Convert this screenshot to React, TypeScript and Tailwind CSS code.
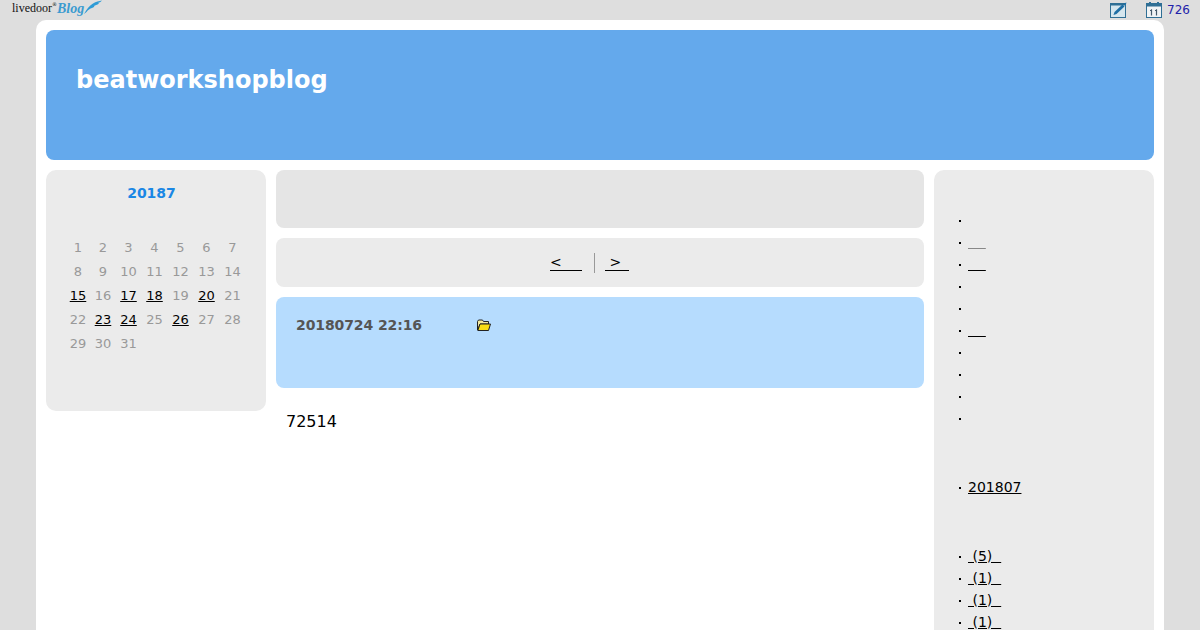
import React from "react";

const dejavu = "font-['DejaVu_Sans',sans-serif]";

const LINKED_DAYS = [15, 17, 18, 20, 23, 24, 26];
const DAYS = Array.from({ length: 31 }, (_, i) => i + 1);

const MENU = [
  { link: false },
  { link: true, grey: true },
  { link: true },
  { link: false },
  { link: false },
  { link: true },
  { link: false },
  { link: false },
  { link: false },
  { link: false },
];

const Bullet = () => (
  <span className="w-[8px] shrink-0 text-[14px] leading-[22px] text-black">
    <span className="ml-[-1px] inline-block h-[2px] w-[2px] bg-black align-middle" />
  </span>
);

const LogoFeather = () => (
  <svg width="18" height="15" viewBox="0 0 18 15">
    <path d="M0 14 C3 9 5 6 9 3.5 C12 1.5 15 1 18 0.5 C16.5 2 15.5 2.5 14 3 C15.5 3 15 4 13.5 4.5 C12 5 11 5.5 10 6 C11 6.5 9.5 7.5 8 8 C6 8.5 4 10 2.5 12 Z" fill="#2e9bd6" />
  </svg>
);

const EditIcon = () => (
  <svg width="18" height="17" viewBox="0 0 18 17">
    <rect x="0.5" y="1.5" width="15" height="14" fill="#d5e6ee" stroke="#2f6f95" />
    <rect x="0" y="1" width="15" height="2.5" fill="#2f6f95" />
    <path d="M3.5 13 L4.5 10 L12.5 2.5 L14.5 4.5 L6.5 12 Z" fill="#1d6ea5" />
    <path d="M13.5 1.5 L16.5 0.5 L15.5 3.5 Z" fill="#1d6ea5" />
  </svg>
);

const CalendarIcon = () => (
  <svg width="17" height="17" viewBox="0 0 17 17">
    <rect x="0.5" y="1.5" width="15" height="14" fill="#f0f3f5" stroke="#2f6f95" />
    <rect x="0" y="1.5" width="16" height="3" fill="#2f6f95" />
    <rect x="3" y="0" width="2" height="3" fill="#2f6f95" />
    <rect x="11" y="0" width="2" height="3" fill="#2f6f95" />
    <path d="M5.5 7.5 V13.5 M10.5 7.5 V13.5" stroke="#44596b" strokeWidth="1.2" />
    <path d="M4 9 L5.5 7.5 M9 9 L10.5 7.5" stroke="#44596b" />
  </svg>
);

const FolderIcon = () => (
  <svg width="14" height="13" viewBox="0 0 14 13">
    <path d="M0.5 2.5 L1.5 1 H5.5 L6.5 2.5 H11.5 V5 H3 L0.5 11 Z" fill="#f3e9a0" stroke="#222" />
    <path d="M3 5 H13.5 L11.5 11.5 H0.8 Z" fill="#f7dc14" stroke="#222" />
  </svg>
);

const App = () => {
  return (
    <div className={`h-screen overflow-hidden bg-[#dedede] ${dejavu}`}>
      {/* livedoor bar */}
      <div className="flex h-[20px] items-start justify-between pl-[12px] pr-[10px]">
        <div className="flex items-start">
          <span className="font-['Liberation_Serif',serif] text-[12px] leading-[17px] text-[#111]">livedoor</span>
          <span className="text-[5px] leading-[8px] text-[#111]">®</span>
          <span className="font-['Liberation_Serif',serif] text-[14px] font-bold italic leading-[17px] text-[#3b9bd0]">Blog</span>
          <LogoFeather />
        </div>
        <div className="flex items-start pt-[2px]">
          <EditIcon />
          <span className="ml-[18px]"><CalendarIcon /></span>
          <span className="ml-[4px] text-[12px] leading-[16px] text-[#2222aa]">726</span>
        </div>
      </div>

      {/* page */}
      <div className="mx-[36px] rounded-t-[10px] bg-white p-[10px] pb-0">
        <header className="h-[130px] rounded-[8px] bg-[#64a9ec] pl-[30px] pt-[35px]">
          <h1 className="text-[24px] font-bold leading-[30px] text-white">beatworkshopblog</h1>
        </header>

        <div className="mt-[10px] flex gap-[10px]">
          {/* calendar */}
          <aside className="h-[241px] w-[220px] shrink-0 rounded-[10px] bg-[#ebebeb] pt-[15px]">
            <div className="pr-[9px] text-center text-[14px] font-bold leading-[17px] text-[#1b87e5]">20187</div>
            <div className="mt-[34px] flex justify-center pr-[1px]">
              <div className="grid grid-cols-[25px_25px_26px_26px_26px_26px_26px] auto-rows-[24px] text-center text-[13px] leading-[24px] text-[#999999]">
                {DAYS.map((d) =>
                  LINKED_DAYS.includes(d) ? (
                    <a key={d} className="text-black underline">{d}</a>
                  ) : (
                    <span key={d}>{d}</span>
                  ),
                )}
              </div>
            </div>
          </aside>

          {/* main column */}
          <main className="min-w-0 flex-1">
            <div className="h-[58px] rounded-[8px] bg-[#e5e5e5]" />
            <div className="mt-[10px] flex h-[49px] items-center justify-center rounded-[8px] bg-[#ebebeb] pr-[21px] text-[14px] text-black">
              <a className="w-[32px] border-b border-black leading-[16px]">{"<"}</a>
              <span className="ml-[12px] mr-[10px] h-[20px] w-px bg-[#999999]" />
              <a className="w-[24px] whitespace-pre border-b border-black leading-[16px]">{" >"}</a>
            </div>
            <div className="mt-[10px] h-[91px] rounded-[8px] bg-[#b6dcfe] pl-[20px] pt-[19px]">
              <div className="flex items-center">
                <span className="text-[14px] font-bold leading-[18px] tracking-[-0.1px] text-[#555555]">20180724 22:16</span>
                <span className="ml-[55px]"><FolderIcon /></span>
              </div>
            </div>
            <p className="mt-[24px] pl-[10px] text-[16px] leading-[20px] text-black">72514</p>
          </main>

          {/* sidebar */}
          <aside className="h-[500px] w-[220px] shrink-0 rounded-t-[10px] bg-[#ebebeb] pl-[26px] pt-[39px] text-[14px] text-black">
            <ul>
              {MENU.map((m, i) => (
                <li key={i} className="flex h-[22px] leading-[22px]">
                  <Bullet />
                  {m.link && (
                    <a className={`whitespace-pre underline ${m.grey ? "text-[#888888]" : ""}`}>{"    "}</a>
                  )}
                </li>
              ))}
            </ul>
            <ul className="mt-[47px]">
              <li className="flex h-[22px] leading-[22px]">
                <Bullet />
                <a className="underline">201807</a>
              </li>
            </ul>
            <ul className="mt-[47px]">
              {["(5)", "(1)", "(1)", "(1)", "(1)"].map((c, i) => (
                <li key={i} className="flex h-[22px] leading-[22px]">
                  <Bullet />
                  <a className="whitespace-pre underline">{` ${c}  `}</a>
                </li>
              ))}
            </ul>
          </aside>
        </div>
      </div>
    </div>
  );
};

export default App;
